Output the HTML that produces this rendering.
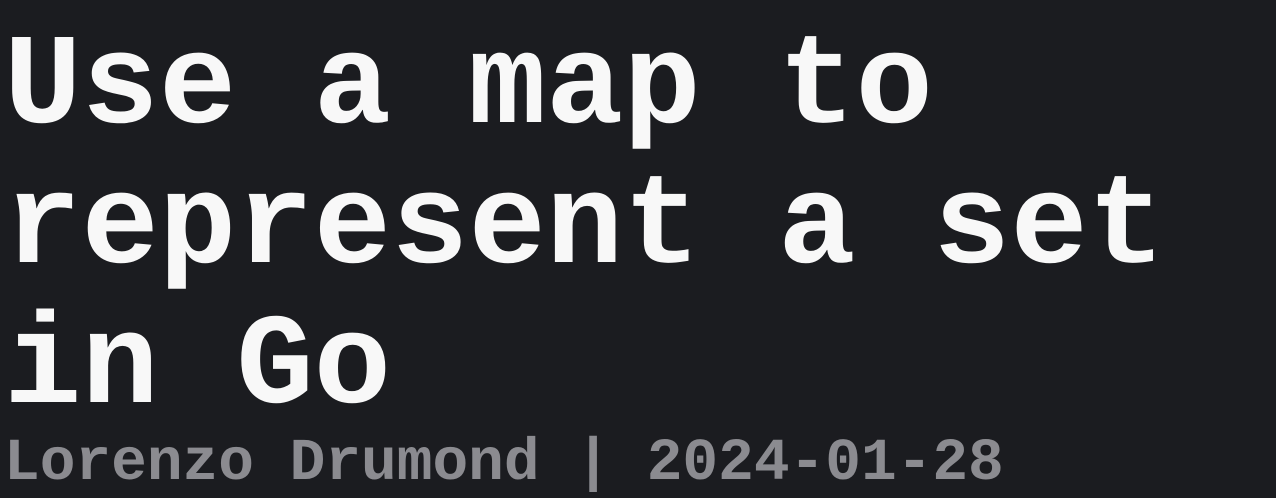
<!DOCTYPE html>
<html><head><meta charset="utf-8"><style>
html,body{margin:0;padding:0;width:1276px;height:498px;overflow:hidden;background:#1b1c20;}
.t{position:absolute;left:4px;top:18px;font-family:"Liberation Mono",monospace;font-weight:bold;font-size:129px;line-height:140px;color:#f8f8f8;white-space:pre;margin:0;}
.s{position:absolute;left:4px;top:433px;font-family:"Liberation Mono",monospace;font-weight:bold;font-size:59.5px;line-height:60px;color:#8b8b90;white-space:pre;margin:0;}
</style></head><body>
<div class="t">Use a map to
represent a set
in Go</div>
<div class="s">Lorenzo Drumond | 2024-01-28</div>
</body></html>
